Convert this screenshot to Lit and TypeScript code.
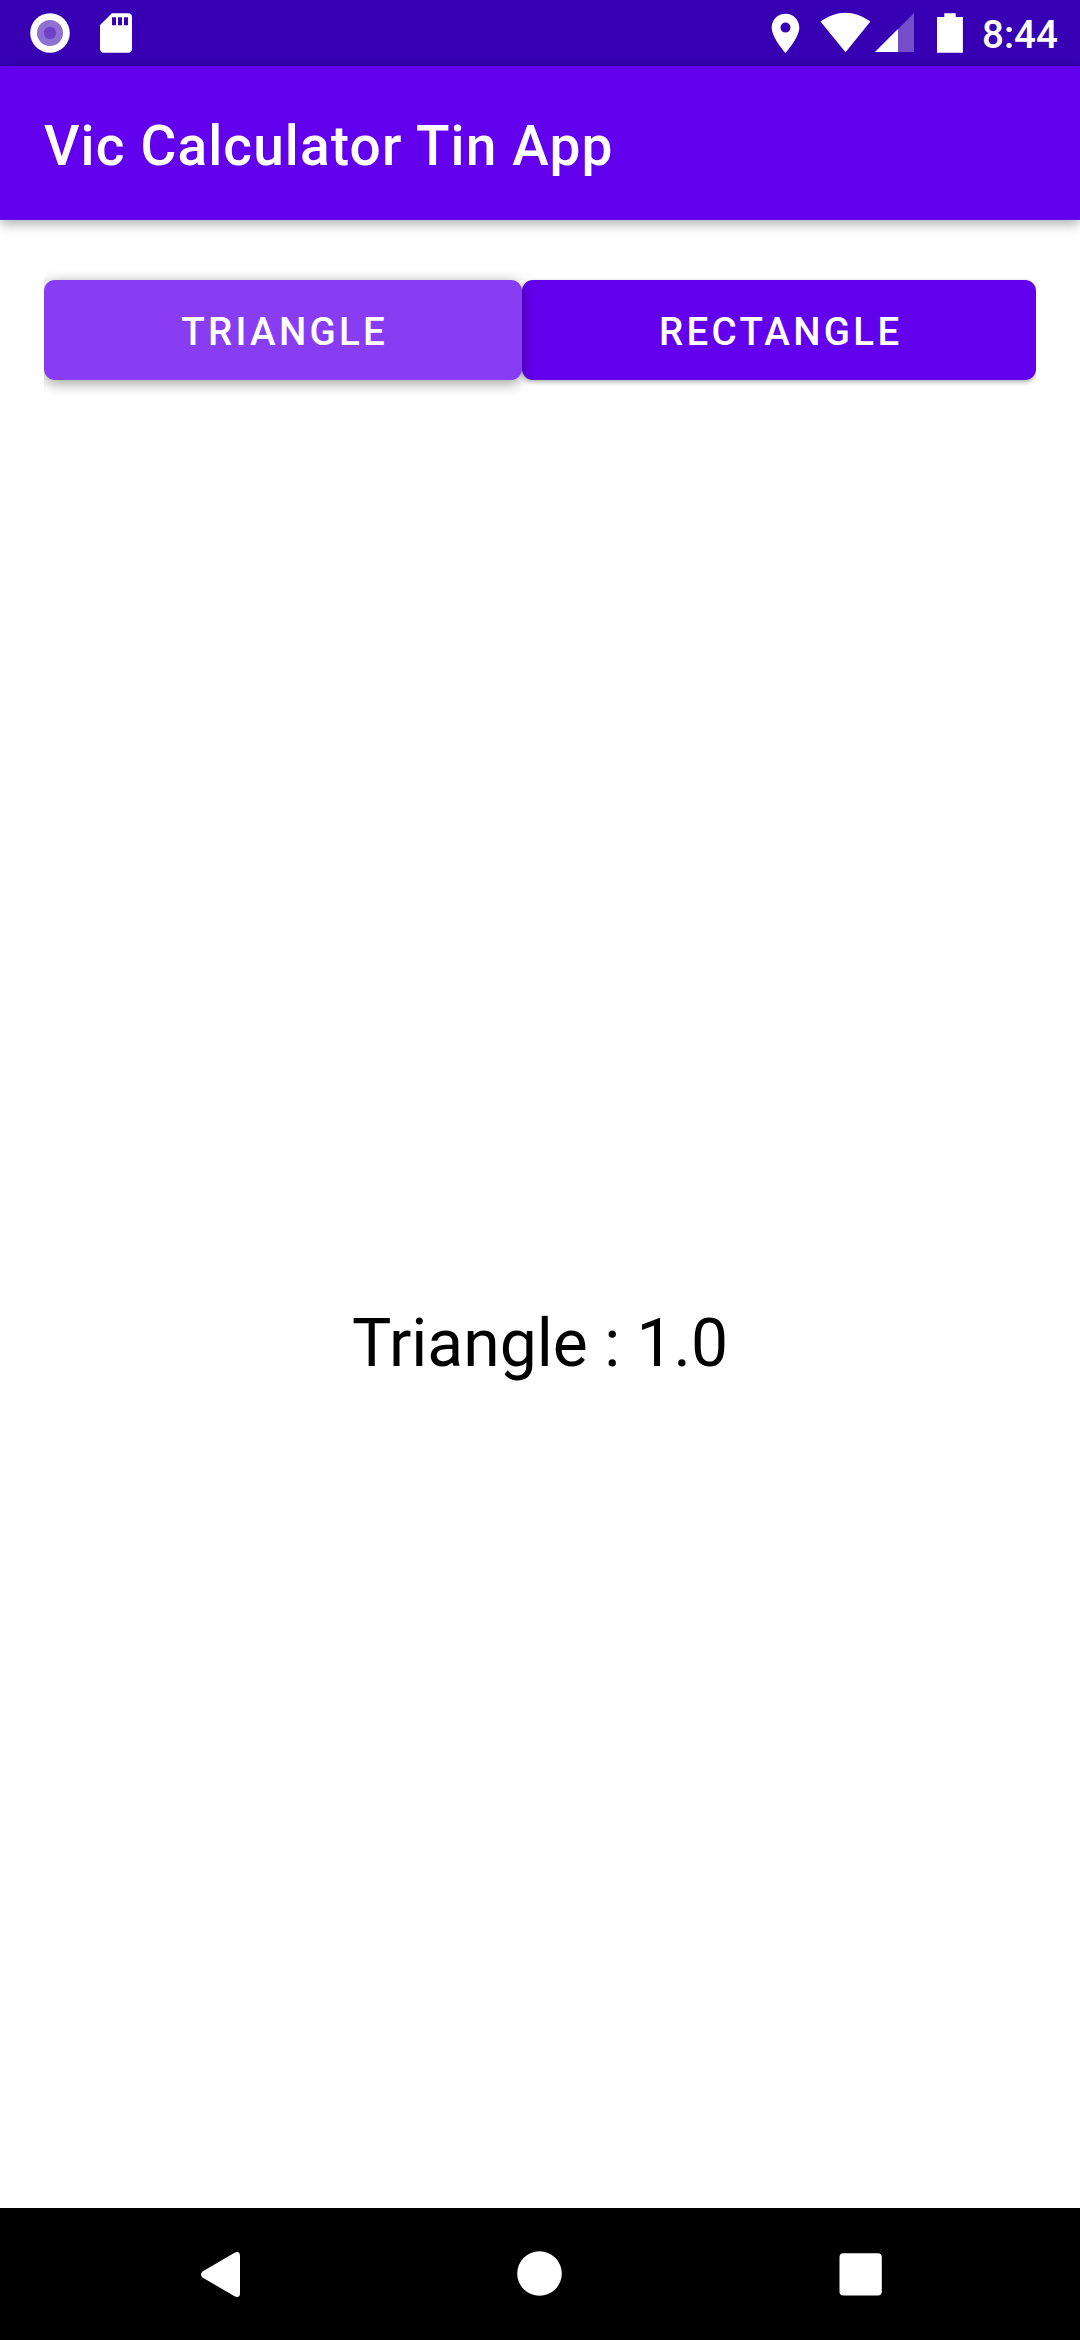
import { LitElement, html, css } from "lit";
import { customElement } from "lit/decorators.js";

@customElement("app-root")
export class AppRoot extends LitElement {
  static styles = css`
    :host {
      display: flex;
      flex-direction: column;
      width: 1080px;
      height: 2340px;
      background: #fff;
      font-family: Roboto, "Liberation Sans", sans-serif;
      overflow: hidden;
    }
    svg {
      display: block;
    }
    .status {
      display: flex;
      justify-content: space-between;
      height: 66px;
      background: #3700b3;
      flex: none;
    }
    .status-end {
      display: flex;
    }
    .clock {
      width: 110px;
      box-sizing: border-box;
      padding-left: 12px;
      font-size: 38.5px;
      font-weight: 500;
      line-height: 69px;
      color: #fff;
      white-space: nowrap;
    }
    .appbar {
      display: flex;
      align-items: center;
      height: 154px;
      box-sizing: border-box;
      padding: 6px 44px 0;
      background: #6200ee;
      box-shadow: 0 4px 11px rgba(0, 0, 0, 0.32);
      flex: none;
    }
    .title {
      margin: 0;
      font-size: 55px;
      font-weight: 500;
      line-height: 64px;
      letter-spacing: 1.12px;
      color: #fff;
      white-space: nowrap;
    }
    .content {
      flex: 1;
      display: flex;
      flex-direction: column;
      padding: 44px 44px 0;
    }
    .buttons {
      display: flex;
      height: 132px;
      box-sizing: border-box;
      padding: 16px 0;
      overflow: hidden;
    }
    .btn {
      border: 0;
      margin: 0;
      padding: 3px 0 0 3.4px;
      border-radius: 11px;
      height: 100px;
      color: #fff;
      background: #6200ee;
      font: 500 38.5px/46px Roboto, "Liberation Sans", sans-serif;
      letter-spacing: 3.3px;
      box-shadow: 0 2px 5px rgba(0, 0, 0, 0.32);
    }
    .triangle {
      width: 478px;
      position: relative;
      z-index: 1;
      background: #883df2;
      box-shadow: 0 3px 14px rgba(0, 0, 0, 0.4);
    }
    .rectangle {
      width: 514px;
    }
    .result {
      flex: 1;
      display: flex;
      align-items: center;
      justify-content: center;
      padding-top: 83px;
      font-size: 66px;
      line-height: 78px;
      color: #000;
    }
    .nav {
      height: 132px;
      background: #000;
      flex: none;
    }
  `;

  render() {
    return html`
      <header class="status">
        <svg width="160" height="66" viewBox="0 0 160 66">
          <circle cx="50" cy="33" r="19.8" fill="#fff" />
          <circle cx="50" cy="33" r="13" fill="#8f70d3" />
          <circle cx="50" cy="33" r="6.2" fill="#6f42c9" />
          <path
            fill="#fff"
            fill-rule="evenodd"
            d="M112 13.2H128a4 4 0 0 1 4 4V48.8a4 4 0 0 1-4 4H104a4 4 0 0 1-4-4V25zM112 17.2V25.3H116V17.2zM118 17.2V25.3H122V17.2zM124 17.2V25.3H128V17.2z"
          />
        </svg>
        <div class="status-end">
          <svg width="220" height="66" viewBox="750 0 220 66">
            <path
              fill="#fff"
              fill-rule="evenodd"
              d="M785.5 13.7C777.8 13.7 771.7 19.9 771.7 27.6C771.7 38 785.5 53 785.5 53S799.3 38 799.3 27.6C799.3 19.9 793.2 13.7 785.5 13.7zM785.5 32.6a5 5 0 1 1 0-10a5 5 0 0 1 0 10z"
            />
            <path fill="#fff" d="M820.5 21.6C837 9.7 854 9.7 870.4 21.6L845.5 52.3z" />
            <path fill="#fff" fill-opacity=".3" d="M914 13V52H875z" />
            <path fill="#fff" d="M898 29V52H875z" />
            <path fill="#fff" d="M944.3 13.2H955.7V17H962.9V52.8H937V17H944.3z" />
          </svg>
          <div class="clock">8:44</div>
        </div>
      </header>
      <div class="appbar"><h1 class="title">Vic Calculator Tin App</h1></div>
      <main class="content">
        <div class="buttons">
          <button class="btn triangle">TRIANGLE</button>
          <button class="btn rectangle">RECTANGLE</button>
        </div>
        <div class="result">Triangle : 1.0</div>
      </main>
      <nav class="nav">
        <svg width="1080" height="132" viewBox="0 2208 1080 132" fill="#fff">
          <path d="M202.5 2271.5L234.5 2252.8Q240 2250.5 240 2256V2293Q240 2298.5 234.5 2296.2L202.5 2277.5Q199.500 2274.500 202.500 2271.500z" />
          <circle cx="539.500" cy="2273.500" r="22.300" />
          <rect x="839.500" y="2253.300" width="42.300" height="42.300" rx="4" />
        </svg>
      </nav>
    `;
  }
}
